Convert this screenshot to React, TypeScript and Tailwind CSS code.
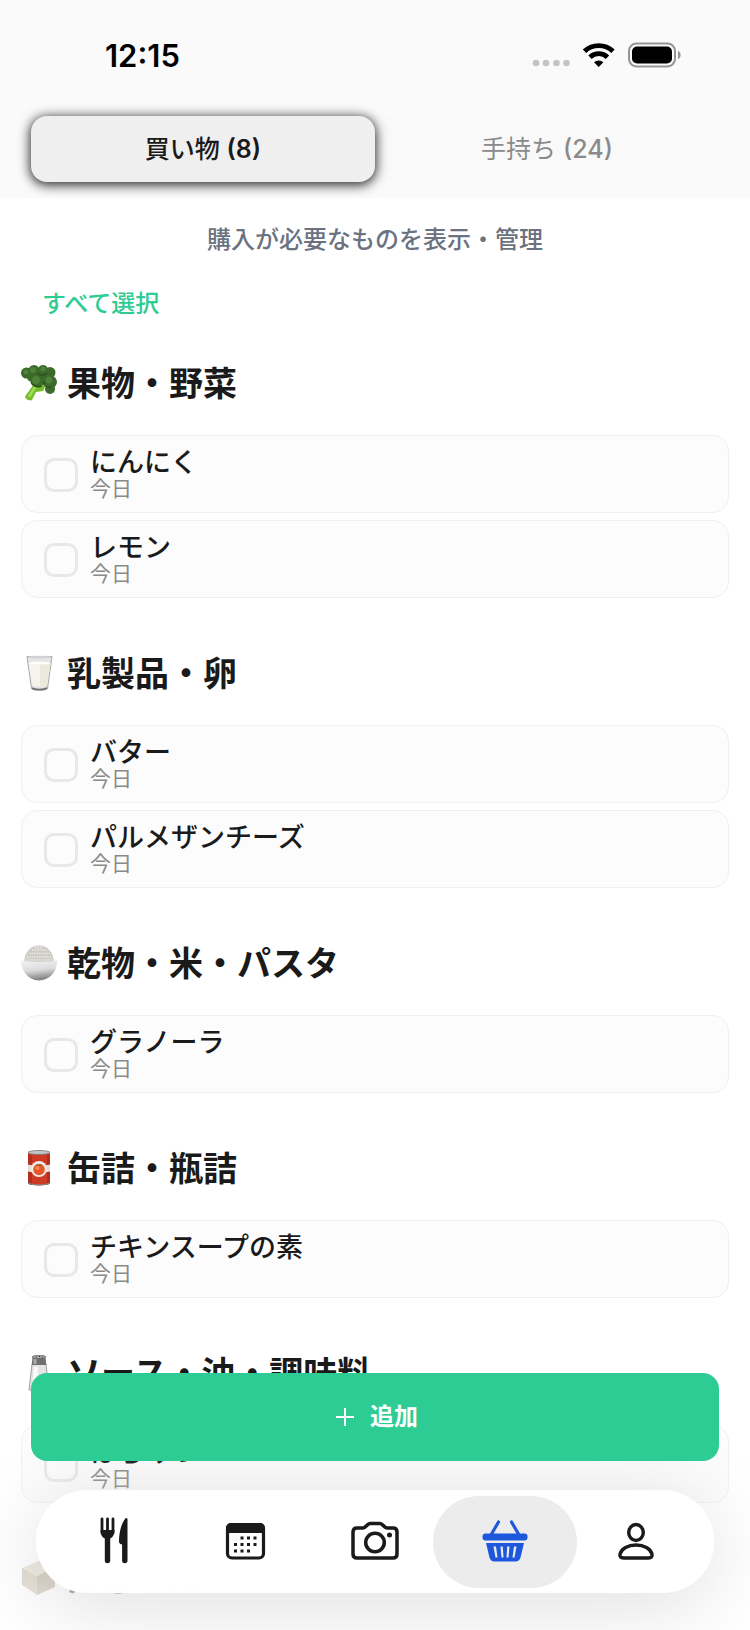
import { useState } from "react";
import type { ReactNode } from "react";
import { clsx } from "clsx";

type Category = {
  title: string;
  icon: ReactNode;
  items: string[];
};

function BroccoliIcon() {
  return (
    <svg viewBox="0 0 36 36" className="size-9 shrink-0" aria-hidden="true">
      <path d="M13 19 4 31.500c0 2.500 5 5 7 3.500l4-8 7-1 4-8-8-3z" fill="#76bb2e" />
      <path d="M14 22 8 32" stroke="#a4dc55" strokeWidth="2.500" fill="none" />
      <g fill="#3c6a2b">
        <circle cx="5.500" cy="8" r="5.500" />
        <circle cx="13" cy="5.500" r="5.500" />
        <circle cx="22" cy="5" r="5" />
        <circle cx="29" cy="7.500" r="5.500" />
        <circle cx="30" cy="17" r="6" />
        <circle cx="29" cy="24" r="5" />
        <circle cx="21" cy="12" r="8" />
        <circle cx="11" cy="12" r="5" />
        <circle cx="16" cy="16" r="6" />
      </g>
      <g fill="#4f8239">
        <circle cx="15" cy="15" r="4" />
        <circle cx="12" cy="5" r="3" />
        <circle cx="22" cy="4" r="2.500" />
        <circle cx="28" cy="15" r="3.500" />
        <circle cx="5" cy="7" r="2.500" />
      </g>
      <path d="M10 17c1 4 6 6 11 4M23 17c0 4 3 6 7 5M17 8c2 3 6 3 9 0" stroke="#244819" strokeWidth="1.200" fill="none" />
    </svg>
  );
}

function MilkIcon() {
  return (
    <svg viewBox="0 0 36 36" className="size-9 shrink-0" aria-hidden="true">
      <path d="M6 1.500h25l-4.500 32c-3 2.500-13 2.500-16 0z" fill="#e3e4e4" stroke="#a5a7a8" strokeWidth="1" />
      <path d="M7.500 8h22L26 30c-3 2-12 2-15 0z" fill="#f5f4ec" />
      <path d="M19 9h10.500L26 30c-2 1-5 1.500-7 1.500z" fill="#eceadd" />
      <ellipse cx="18.500" cy="8" rx="11" ry="1.500" fill="#fdfdfa" />
      <ellipse cx="18.500" cy="2" rx="12" ry="1.300" fill="#cfd1d2" />
      <path d="M11 33c3 2 12 2 15 0" stroke="#6f7273" strokeWidth="1.600" fill="none" />
    </svg>
  );
}

function RiceIcon() {
  return (
    <svg viewBox="0 0 36 36" className="size-9 shrink-0" aria-hidden="true">
      <defs>
        <linearGradient id="bowl" x1="0" y1="0" x2="0.200" y2="1">
          <stop offset="0" stopColor="#f4f4f4" />
          <stop offset="0.550" stopColor="#dcdcdc" />
          <stop offset="1" stopColor="#858585" />
        </linearGradient>
      </defs>
      <path d="M3 17C4 6 10 .5 18 .5S32 6 33 17z" fill="#cfccc7" />
      <path
        d="M6 12h25M8 8.500h21M11 5h15M14 2.500h8M5 15h27"
        stroke="#e9e7e3"
        strokeWidth="1.600"
        strokeDasharray="1.5 1"
      />
      <path d="M0 15c5 2.500 31 2.500 36 0 .5 10-6 20-18 20.500C6 35 0 25 0 15z" fill="url(#bowl)" />
    </svg>
  );
}

function CanIcon() {
  return (
    <svg viewBox="0 0 36 36" className="size-9 shrink-0" aria-hidden="true">
      <path d="M7 2.500h22v31c-4 2.500-18 2.500-22 0z" fill="#cf3a26" />
      <path d="M7 5h4v30c-2-.3-3-.8-4-1.500zM26 5h3v28.500c-1 .7-2 1-3 1.300z" fill="#b32e1e" />
      <path d="M7 14.500c6 1.500 16 1.500 22 0v7c-6 1.500-16 1.500-22 0z" fill="#e4ddd6" />
      <circle cx="18" cy="19" r="8" fill="#f0ebe4" />
      <circle cx="18" cy="19.500" r="5.800" fill="#e8562c" />
      <circle cx="16.500" cy="18" r="2" fill="#f58a4e" />
      <path d="m15 14 3 1.200 3-1.500-1.500 2.300h-3z" fill="#5b7d2c" />
      <ellipse cx="18" cy="2.500" rx="11" ry="2" fill="#c3c4c5" stroke="#737576" strokeWidth="0.800" />
      <path d="M7 33c4 2.500 18 2.500 22 0" stroke="#8b8585" strokeWidth="1.200" fill="none" />
    </svg>
  );
}

function SaltIcon() {
  return (
    <svg viewBox="0 0 36 36" className="size-9 shrink-0" aria-hidden="true">
      <path d="M11 9h14l3 26H8z" fill="#e4e4e4" stroke="#a0a0a0" strokeWidth="1" />
      <path d="M13 12h4l-1 21h-5z" fill="#fafafa" />
      <path d="M11.500 2.500h13l.8 7.500H10.700z" fill="#6f6f6f" />
      <path d="M12.500 4h3v5h-3z" fill="#a8a8a8" />
      <ellipse cx="18" cy="2" rx="6.800" ry="1.700" fill="#a9a9a9" stroke="#5f5f5f" strokeWidth="0.800" />
      <path d="M15 2h1M18 1.500h1M20.500 2h1" stroke="#333" strokeWidth="1" />
    </svg>
  );
}

function CubeIcon() {
  return (
    <svg viewBox="0 0 36 36" className="size-9 shrink-0" aria-hidden="true">
      <path d="M1 8 18 1l16 6-18 9z" fill="#d9d1bd" />
      <path d="M1 8l15 8v19L1 25z" fill="#bdb195" />
      <path d="m16 16 18-9v20L16 35z" fill="#a3977b" />
    </svg>
  );
}

const categories: Category[] = [
  { title: "果物・野菜", icon: <BroccoliIcon />, items: ["にんにく", "レモン"] },
  { title: "乳製品・卵", icon: <MilkIcon />, items: ["バター", "パルメザンチーズ"] },
  { title: "乾物・米・パスタ", icon: <RiceIcon />, items: ["グラノーラ"] },
  { title: "缶詰・瓶詰", icon: <CanIcon />, items: ["チキンスープの素"] },
  { title: "ソース・油・調味料", icon: <SaltIcon />, items: ["はちみつ"] },
  { title: "だし・ルー", icon: <CubeIcon />, items: [] },
];

function StatusBar() {
  return (
    <div className="flex h-28 items-center justify-between pr-[69px] pl-[105px]">
      <span className="text-[31px] leading-9 font-semibold text-black">12:15</span>
      <svg width="149" height="28" viewBox="0 0 149 28" aria-hidden="true">
        <g fill="#c4c4c4">
          <circle cx="4" cy="21" r="3.300" />
          <circle cx="14" cy="21" r="3.300" />
          <circle cx="24.500" cy="21" r="3.300" />
          <circle cx="34.500" cy="21" r="3.300" />
        </g>
        <g fill="none" stroke="#000" strokeWidth="4.800">
          <path d="M52.500 9.300a20.500 20.500 0 0 1 28.500 0" />
          <path d="M58 15.200a12.700 12.700 0 0 1 17.500 0" />
        </g>
        <path d="m66.700 25-4.700-4.700a6.800 6.800 0 0 1 9.400 0z" />
        <rect x="97" y="1.500" width="46" height="23" rx="7.500" fill="none" stroke="#959595" strokeWidth="2" />
        <rect x="100" y="4.500" width="40" height="17" rx="5" />
        <path d="M146 9c3.500 1 3.500 7 0 8z" fill="#959595" />
      </svg>
    </div>
  );
}

function Section({ category }: { category: Category }) {
  return (
    <section>
      <h2 className="flex h-12 items-center gap-2.5 text-[34px] font-bold text-[#1a1a1a]">
        {category.icon}
        {category.title}
      </h2>
      <ul className="mt-7 flex flex-col gap-[7px]">
        {category.items.map((item) => (
          <li key={item}>
            <label className="flex h-[78px] items-center gap-3 rounded-2xl border border-[#f0f0f0] bg-[#fcfcfc] px-[22px] pt-px">
              <input
                type="checkbox"
                className="size-[34px] shrink-0 appearance-none rounded-[10px] border-3 border-[#e8e8e8] checked:border-[#2ecc95] checked:bg-[#2ecc95]"
              />
              <span className="flex flex-col">
                <span className="text-[27px] leading-7 font-medium text-[#1a1a1a]">{item}</span>
                <span className="text-[21px] leading-6 text-[#8a8a8a]">今日</span>
              </span>
            </label>
          </li>
        ))}
      </ul>
    </section>
  );
}

const navItems = [
  {
    label: "レシピ",
    icon: (
      <g fill="currentColor" transform="translate(5 0)">
        <path d="M12.500 3v14M18 3v14M7 3v14" stroke="currentColor" strokeWidth="2.800" strokeLinecap="round" />
        <path d="M5.600 14h13.800c0 5.500-2 7.500-4.200 8.500V44.500a2.700 2.700 0 0 1-5.400 0V22.500C7.600 21.500 5.600 19.500 5.600 14z" />
        <path d="M32.500 3.500v41a2.700 2.700 0 0 1-5.400 0V28.500c-2.500-.4-3.300-1.500-3.100-4.500.5-10 3-17.500 6.300-21.500 1-1 2.200-.5 2.200 1z" />
      </g>
    ),
  },
  {
    label: "カレンダー",
    icon: (
      <g>
        <rect x="6.500" y="8.500" width="36" height="33.500" rx="4.500" fill="none" stroke="currentColor" strokeWidth="3.200" />
        <path d="M5 17V12c0-3 2-5 5-5h29c3 0 5 2 5 5v5z" fill="currentColor" />
        <path
          d="M19.500 22h3M26 22h3M32.500 22h3M13 28.500h3M19.500 28.500h3M26 28.500h3M32.500 28.500h3M13 35h3M19.500 35h3M26 35h3"
          stroke="currentColor"
          strokeWidth="3"
        />
      </g>
    ),
  },
  {
    label: "カメラ",
    icon: (
      <g fill="none" stroke="currentColor" strokeWidth="3.500">
        <path d="M6 12h6c3 0 4-4.500 7-4.500h10c3 0 4 4.500 7 4.500h6c2.500 0 4 1.500 4 4v22c0 2.500-1.500 4-4 4H6c-2.500 0-4-1.500-4-4V16c0-2.500 1.500-4 4-4z" />
        <circle cx="24" cy="26.500" r="9.300" />
        <circle cx="38.500" cy="19" r="2.500" fill="currentColor" stroke="none" />
      </g>
    ),
  },
  {
    label: "買い物",
    icon: (
      <g fill="currentColor">
        <path d="M10.500 18 17.500 6M37.500 18 30.500 6" stroke="currentColor" strokeWidth="3.200" strokeLinecap="round" />
        <rect x="1.500" y="17.500" width="45" height="7" rx="3" />
        <path
          fillRule="evenodd"
          d="M5 27h38l-3.500 14.500c-.7 2.800-2.500 4-5 4h-21c-2.500 0-4.300-1.200-5-4zM12.500 30.500l2 11h2l-1.500-11zM19.500 30.500l1 11h2l-.7-11zM26.200 30.500l-.7 11h2l1-11zM33 30.500l-1.500 11h2l2-11z"
        />
      </g>
    ),
  },
  {
    label: "プロフィール",
    icon: (
      <g fill="none" stroke="currentColor" strokeWidth="3.400">
        <ellipse cx="24" cy="16.500" rx="7.300" ry="8" />
        <path d="M11.500 42h25c3 0 4-1.500 3.500-4-1.500-5.500-8-9-16-9s-14.500 3.500-16 9c-.5 2.500.5 4 3.500 4z" />
      </g>
    ),
  },
];

function TabBar() {
  const current = "買い物";
  return (
    <nav className="mx-9 flex h-[103px] items-center rounded-full bg-white/98 px-[13px] shadow-[0_12px_80px_rgba(0,0,0,0.13)] backdrop-blur-sm">
      {navItems.map(({ label, icon }) => (
        <a
          key={label}
          href="#"
          aria-label={label}
          aria-current={label === current ? "page" : undefined}
          className={clsx("flex min-w-0 flex-1 justify-center", label === current ? "text-[#1d58dc]" : "text-[#1a1a1a]")}
        >
          <span
            className={clsx(
              "flex h-[92px] w-36 shrink-0 items-center justify-center rounded-full pb-1",
              label === current && "bg-[#ececec]"
            )}
          >
            <svg viewBox="0 0 48 48" className="size-12 overflow-visible" aria-hidden="true">
              {icon}
            </svg>
          </span>
        </a>
      ))}
    </nav>
  );
}

export default function App() {
  const [tab, setTab] = useState("shopping");
  const tabs = [
    { id: "shopping", label: "買い物", count: 8 },
    { id: "stock", label: "手持ち", count: 24 },
  ];

  return (
    <div className="flex h-screen flex-col overflow-hidden bg-white font-['Inter','Noto_Sans_CJK_JP',sans-serif]" lang="ja">
      <header className="shrink-0 bg-[#fafafa]">
        <StatusBar />
        <div className="px-[31px] pt-1 pb-4">
          <div role="tablist" className="flex rounded-2xl bg-[#f9f9f9]">
            {tabs.map(({ id, label, count }) => (
              <button
                key={id}
                type="button"
                role="tab"
                aria-selected={tab === id}
                onClick={() => setTab(id)}
                className={clsx(
                  "h-[66px] flex-1 rounded-2xl pt-0.5 text-[25px]",
                  tab === id
                    ? "bg-[#efefef] font-medium text-[#1a1a1a] shadow-[0_2px_12px_1px_rgba(0,0,0,0.85)]"
                    : "text-[#8a8a8a]"
                )}
              >
                {label} <span className={tab === id ? "font-semibold" : "font-medium"}>({count})</span>
              </button>
            ))}
          </div>
        </div>
      </header>

      <main className="min-h-0 flex-1 overflow-hidden px-[21px]">
        <p className="mt-[26px] text-center text-2xl leading-8 font-medium text-[#6b7280]">
          購入が必要なものを表示・管理
        </p>
        <button type="button" className="mt-8 ml-[21px] block text-2xl leading-8 font-medium text-[#2ecc95]">
          すべて選択
        </button>
        <div className="mt-[39px] flex flex-col gap-[51px]">
          {categories.map((category) => (
            <Section key={category.title} category={category} />
          ))}
        </div>
      </main>

      <div className="fixed inset-x-0 bottom-0 bg-linear-to-b from-transparent from-30% to-white/65 to-85% pb-[37px]">
        <div className="px-[31px]">
          <button
            type="button"
            className="relative z-10 flex h-[88px] w-full items-center justify-center gap-4 rounded-2xl bg-[#2ecc95] pl-1 text-2xl font-bold text-white"
          >
            <svg viewBox="0 0 18 18" className="size-[18px]" aria-hidden="true">
              <path d="M9 0v18M0 9h18" stroke="currentColor" strokeWidth="2" />
            </svg>
            追加
          </button>
        </div>
        <div className="mt-[29px]">
          <TabBar />
        </div>
      </div>
    </div>
  );
}
